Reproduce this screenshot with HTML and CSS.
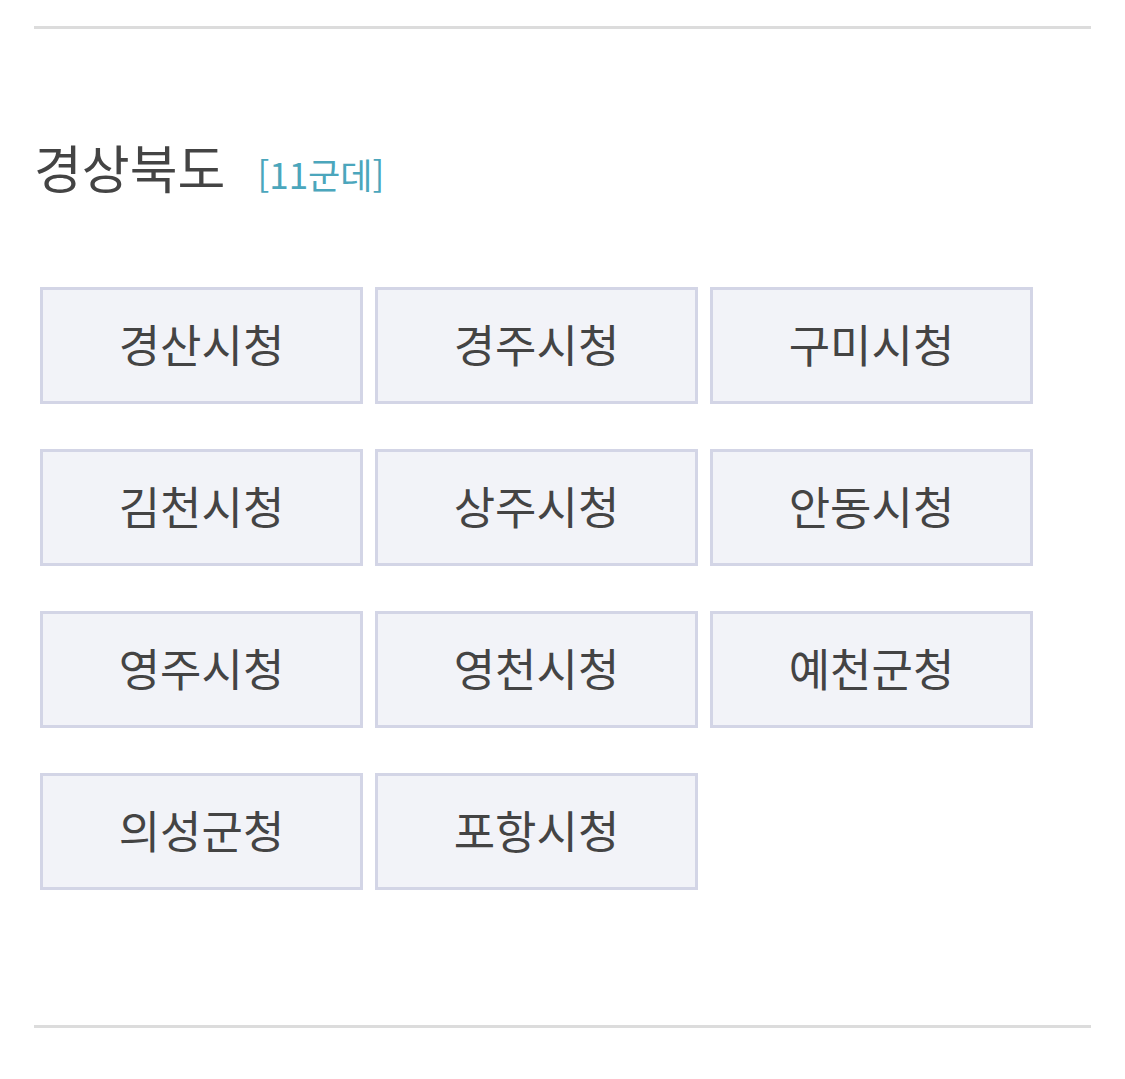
FILE: index.html
```html
<!DOCTYPE html>
<html lang="ko">
<head>
<meta charset="utf-8">
<link rel="stylesheet" href="styles.css">
</head>
<body>
<div class="page">
  <div class="rule"></div>
  <h2 class="region">경상북도<span class="count">[11군데]</span></h2>
  <ul class="offices">
    <li class="office">경산시청</li>
    <li class="office">경주시청</li>
    <li class="office">구미시청</li>
    <li class="office">김천시청</li>
    <li class="office">상주시청</li>
    <li class="office">안동시청</li>
    <li class="office">영주시청</li>
    <li class="office">영천시청</li>
    <li class="office">예천군청</li>
    <li class="office">의성군청</li>
    <li class="office">포항시청</li>
  </ul>
  <div class="rule"></div>
</div>
</body>
</html>
```
FILE: styles.css
```css
html, body {
  margin: 0;
  padding: 0;
  background: #ffffff;
}
body {
  font-family: "Noto Sans CJK KR", "Noto Sans", sans-serif;
  color: #444444;
}
.page {
  width: 1057px;
  margin-left: 34px;
  padding-top: 26px;
}
.rule {
  height: 3px;
  background: #dcdcdc;
}
.region {
  margin: 103px 0 0 0;
  font-size: 52px;
  font-weight: 400;
  line-height: 70px;
  color: #444444;
  display: flex;
  align-items: baseline;
}
.count {
  margin-left: 32px;
  font-size: 35px;
  color: #4ba6bc;
}
.offices {
  list-style: none;
  margin: 78px 0 0 6px;
  padding: 0;
  display: grid;
  grid-template-columns: repeat(3, 323px);
  grid-auto-rows: 117px;
  column-gap: 12px;
  row-gap: 45px;
}
.office {
  box-sizing: border-box;
  border: 3px solid #d3d5e6;
  background: #f2f3f8;
  display: flex;
  align-items: center;
  justify-content: center;
  padding-bottom: 4px;
  font-size: 45px;
  color: #444444;
}
.offices + .rule {
  margin-top: 135px;
}
```
